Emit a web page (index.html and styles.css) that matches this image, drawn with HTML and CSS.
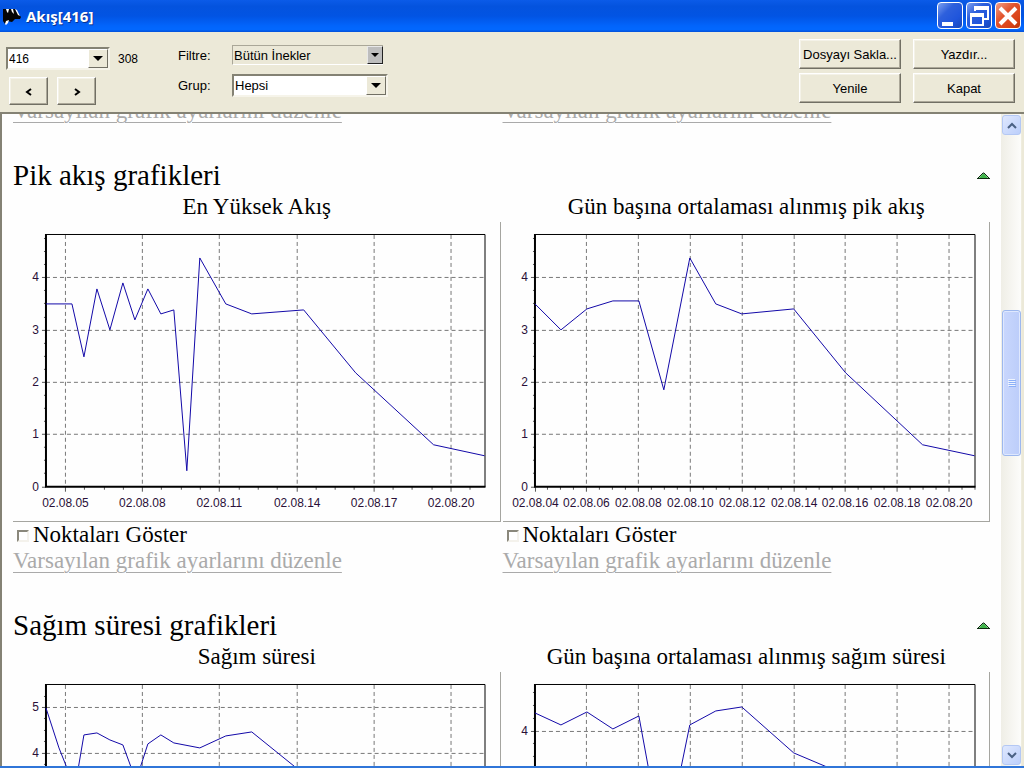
FILE: index.html
```html
<!DOCTYPE html>
<html lang="tr">
<head>
<meta charset="utf-8">
<meta name="viewport" content="width=device-width, initial-scale=1">
<title>Akış[416]</title>
<link rel="stylesheet" href="styles.css">
</head>
<body>
<div class="window">
  <header class="titlebar">
    <svg class="app-icon" width="18" height="20" viewBox="0 0 18 20" aria-hidden="true">
      <path d="M0 3h12l2 3 4 5-1 2-5 0-3 3-5-1-2 3-2-3z" fill="#050505"/>
      <path d="M3 3h3l-1 4-1-1zM8 3l2 0 1 5-2-2zM12 3l2 1 3 6-2-1zM2 18l1-3 3-1-1 3-2 2z" fill="#fff"/>
    </svg>
    <h1 class="title">Akış[416]</h1>
    <div class="window-buttons">
      <button class="wbtn" aria-label="Simge durumuna küçült"><svg width="24" height="24" viewBox="0 0 24 24"><path d="M4 18h11v4H4z" fill="#fff"/></svg></button>
      <button class="wbtn" aria-label="Önceki boyut"><svg width="24" height="24" viewBox="0 0 24 24"><path d="M8 7V3h13v12h-4" fill="none" stroke="#fff" stroke-width="2"/><path d="M7 4h15M3 11h14" stroke="#fff" stroke-width="4"/><path d="M4 10h12v11H4z" fill="none" stroke="#fff" stroke-width="2"/></svg></button>
      <button class="wbtn wbtn-close" aria-label="Pencereyi kapat"><svg width="24" height="24" viewBox="0 0 24 24"><path d="M4 4l16 16M20 4L4 20" stroke="#fff" stroke-width="4"/></svg></button>
    </div>
  </header>

  <div class="toolbar">
    <div class="picker">
      <div class="picker-row">
        <div class="combo combo-cow">
          <select aria-label="İnek numarası"><option>416</option></select>
          <span class="drop"><svg width="10" height="5" viewBox="0 0 10 5"><path d="M0 0h10L5 5z"/></svg></span>
        </div>
        <span class="count">308</span>
      </div>
      <div class="picker-nav">
        <button class="btn btn-nav" aria-label="Önceki"><svg width="8" height="8" viewBox="0 0 8 8"><path d="M6 1L2 4l4 3" class="nav-line"/></svg></button>
        <button class="btn btn-nav" aria-label="Sonraki"><svg width="8" height="8" viewBox="0 0 8 8"><path d="M2 1l4 3-4 3" class="nav-line"/></svg></button>
      </div>
    </div>
    <div class="filters">
      <label for="filter">Filtre:</label>
      <div class="combo combo-flat">
        <select id="filter"><option>Bütün İnekler</option></select>
        <span class="drop drop-small"><svg width="8" height="4" viewBox="0 0 8 4"><path d="M0 0h8L4 4z"/></svg></span>
      </div>
      <label for="group">Grup:</label>
      <div class="combo">
        <select id="group"><option>Hepsi</option></select>
        <span class="drop"><svg width="10" height="5" viewBox="0 0 10 5"><path d="M0 0h10L5 5z"/></svg></span>
      </div>
    </div>
    <div class="actions">
      <button class="btn">Dosyayı Sakla...</button>
      <button class="btn">Yazdır...</button>
      <button class="btn">Yenile</button>
      <button class="btn">Kapat</button>
    </div>
  </div>

  <div class="view">
    <main class="report">
      <div class="columns tail">
        <div><a class="edit" href="#">Varsayılan grafik ayarlarını düzenle</a></div>
        <div><a class="edit" href="#">Varsayılan grafik ayarlarını düzenle</a></div>
      </div>

      <section class="group">
        <div class="group-head">
          <h2>Pik akış grafikleri</h2>
          <a href="#" aria-label="Yukarı"><svg width="13" height="8" viewBox="0 0 13 8"><path d="M1.500 7.500L6 2.500h1l4.500 5z" fill="#3fb54a"/><path d="M1 7L6 2h1l5 5M0 7.500h13" fill="none" stroke="#0c2a10"/></svg></a>
        </div>
        <div class="columns">
          <article class="card">
            <h3>En Yüksek Akış</h3>
            <div class="chart" data-chart="peak"></div>
            <label class="check"><input type="checkbox">Noktaları Göster</label>
            <a class="edit" href="#">Varsayılan grafik ayarlarını düzenle</a>
          </article>
          <article class="card">
            <h3>Gün başına ortalaması alınmış pik akış</h3>
            <div class="chart" data-chart="peakAvg"></div>
            <label class="check"><input type="checkbox">Noktaları Göster</label>
            <a class="edit" href="#">Varsayılan grafik ayarlarını düzenle</a>
          </article>
        </div>
      </section>

      <section class="group">
        <div class="group-head">
          <h2>Sağım süresi grafikleri</h2>
          <a href="#" aria-label="Yukarı"><svg width="13" height="8" viewBox="0 0 13 8"><path d="M1.500 7.500L6 2.500h1l4.500 5z" fill="#3fb54a"/><path d="M1 7L6 2h1l5 5M0 7.500h13" fill="none" stroke="#0c2a10"/></svg></a>
        </div>
        <div class="columns">
          <article class="card">
            <h3>Sağım süresi</h3>
            <div class="chart" data-chart="time"></div>
          </article>
          <article class="card">
            <h3>Gün başına ortalaması alınmış sağım süresi</h3>
            <div class="chart" data-chart="timeAvg"></div>
          </article>
        </div>
      </section>
    </main>

    <div class="scrollbar">
      <button class="sbtn" aria-label="Yukarı kaydır"><svg width="10" height="7" viewBox="0 0 10 7"><path d="M1 6l4-4 4 4" class="chevron"/></svg></button>
      <div class="track">
        <div class="space-before"></div>
        <div class="thumb"><svg width="8" height="8" viewBox="0 0 8 8"><path d="M0 .5h7M0 2.5h7M0 4.5h7M0 6.5h7" stroke="#eef4fe"/><path d="M1 1.5h7M1 3.5h7M1 5.5h7M1 7.5h7" stroke="#8cb0f8"/></svg></div>
        <div class="space-after"></div>
      </div>
      <button class="sbtn" aria-label="Aşağı kaydır"><svg width="10" height="7" viewBox="0 0 10 7"><path d="M1 1l4 4 4-4" class="chevron"/></svg></button>
    </div>
  </div>
</div>
<script src="charts.js"></script>
</body>
</html>
```
FILE: styles.css
```css
* { box-sizing: border-box; }

body {
  margin: 0;
  font-family: "Liberation Sans", Arial, sans-serif;
  font-size: 13px;
  color: #000;
}

h1, h2, h3 { margin: 0; font-weight: 400; }

button, select, input { font: inherit; color: inherit; margin: 0; }

.window {
  display: flex;
  flex-direction: column;
  height: 100vh;
  overflow: hidden;
  background: #ece9d8;
  border-bottom: 2px solid #2f75d8;
}

/* title bar */
.titlebar {
  display: flex;
  align-items: center;
  flex: none;
  height: 32px;
  padding: 0 3px;
  background: linear-gradient(#0b5be8 0, #0453de 20%, #0254e3 50%, #0264fb 80%, #0268ff 92%, #0450d8 100%);
}

.app-icon { flex: none; margin-right: 5px; }

.title {
  flex: 1;
  font: 700 15px/20px "Open Sans", sans-serif;
  color: #fff;
  text-shadow: 1px 1px 0 #0a3190;
}

.window-buttons { display: flex; gap: 3px; padding-bottom: 1px; }

.wbtn {
  width: 26px;
  height: 27px;
  padding: 0;
  border: 1px solid #fff;
  border-radius: 4px;
  background: linear-gradient(135deg, #7da0f0 0, #2e60dc 35%, #1f55dc 70%, #1747b8 100%);
}

.wbtn svg { display: block; }

.wbtn-close { background: linear-gradient(135deg, #f2a088 0, #e2552f 40%, #da4318 75%, #b83208 100%); }

/* toolbar */
.toolbar {
  display: flex;
  align-items: flex-start;
  flex: none;
  height: 80px;
  padding: 7px 9px 0 6px;
}

.picker { width: 172px; padding-top: 8px; }
.picker-row { display: flex; align-items: center; gap: 8px; font-size: 12px; }
.picker-nav { display: flex; gap: 9px; padding: 7px 0 0 3px; }

.combo {
  display: flex;
  width: 156px;
  height: 23px;
  border: 2px solid;
  border-color: #848274 #f6f4ea #f6f4ea #848274;
  background: #fff;
}

.combo-cow { width: 104px; }

.combo select {
  flex: 1;
  min-width: 0;
  padding: 0 1px;
  border: 0;
  appearance: none;
  background: transparent;
}

.combo-cow select { font-size: 12px; }

.combo-flat {
  width: 151px;
  height: 20px;
  border-width: 1px 0 1px 1px;
  border-color: #aaa798 #fff #fff #aaa798;
  background: #ebe8d7;
}

.drop {
  display: flex;
  align-items: center;
  justify-content: center;
  flex: none;
  width: 20px;
  border: 1px solid;
  border-color: #fff #716f64 #716f64 #fff;
  background: #ece9d8;
}

.drop-small {
  width: 16px;
  border-color: #e8e8e8 #222 #222 #e8e8e8;
  background: #bdbdbd;
}

.filters {
  display: grid;
  grid-template-columns: 54px 156px;
  row-gap: 9px;
  align-items: center;
  padding-top: 6px;
}

.filters select { font-size: 13px; }

.actions {
  display: grid;
  grid-template-columns: 102px 102px;
  gap: 4px 12px;
  margin-left: auto;
}

.btn {
  height: 30px;
  padding: 0;
  border: 1px solid;
  border-color: #fff #716f64 #716f64 #fff;
  box-shadow: inset -1px -1px #aca899, inset 1px 1px #f4f2e8;
  background: #ece9d8;
  white-space: nowrap;
}

.btn-nav { width: 39px; height: 28px; }
.nav-line { fill: none; stroke: #000; stroke-width: 2; }

/* report pane */
.view {
  display: flex;
  flex: 1;
  min-height: 0;
  border: solid #848274;
  border-width: 2px 0 0 2px;
  background: #fefefe;
}

.report {
  flex: 1;
  min-width: 0;
  overflow: hidden;
  padding: 0 11px;
  font-family: "Liberation Serif", "Times New Roman", serif;
  font-size: 23px;
  line-height: 26px;
}

.columns { display: grid; grid-template-columns: 1fr 1fr; column-gap: 2px; }

.tail { margin-top: -16px; }

.edit {
  display: block;
  width: fit-content;
  color: #aaa;
  text-decoration: underline;
  text-decoration-thickness: 1px;
  text-underline-offset: 4px;
}

.group { padding-top: 33px; }

.group-head {
  display: flex;
  align-items: center;
  justify-content: space-between;
  line-height: 36px;
}

.group-head h2 { font-size: 29px; }
.group-head svg { display: block; }

.card h3 { font-size: 23px; line-height: 28px; padding-bottom: 1px; text-align: center; }

.chart {
  border: solid #a5a5a0;
  border-width: 0 1px 1px 0;
}

.chart svg { display: block; width: 100%; height: auto; }

.frame { fill: none; stroke: #000; }
.axis { fill: none; stroke: #000; stroke-width: 2; }
.grid { stroke: #777; stroke-dasharray: 4 3; }
.tick { stroke: #555; }
.series { fill: none; stroke: #1208a8; }
.axis-text { font: 12px "Liberation Sans", Arial, sans-serif; fill: #2a1038; }

.check { display: flex; align-items: center; }

.check input {
  width: 12px;
  height: 12px;
  margin: 2px 4px 0 4px;
  appearance: none;
  border: 2px solid;
  border-color: #8a887c #f4f2ec #f4f2ec #8a887c;
  background: #fff;
}

/* scrollbar */
.scrollbar {
  display: flex;
  flex-direction: column;
  flex: none;
  width: 23px;
  padding: 1px 2px 1px 1px;
  background: linear-gradient(90deg, #efeee6, #fcfcfa 85%, #ece9d8 90%);
}

.sbtn {
  display: flex;
  align-items: center;
  justify-content: center;
  flex: none;
  width: 19px;
  height: 20px;
  padding: 0;
  border: 1px solid #b4c8f4;
  border-radius: 3px;
  background: linear-gradient(135deg, #dfe8fe, #bccffb);
}

.chevron { fill: none; stroke: #4a6184; stroke-width: 2; }

.track { display: flex; flex-direction: column; flex: 1; }
.space-before { flex: 176; }
.space-after { flex: 290; }

.thumb {
  display: flex;
  align-items: center;
  justify-content: center;
  flex: 144;
  width: 19px;
  border: 1px solid #9db8ee;
  border-radius: 3px;
  box-shadow: inset 0 0 0 1px #dfe8fe;
  background: linear-gradient(90deg, #c9d7fd, #bccdfa);
}
```
FILE: charts.js
```js
const SVG_NS = 'http://www.w3.org/2000/svg';

// Plot geometry, shared by all charts (units of the SVG view box).
const PLOT = { top: 13, bottom: 265, right: 473, width: 487, height: 299 };

const THREE_DAY = { left: 33, first: 52.4, step: 77.2, labels: ['05', '08', '11', '14', '17', '20'] };
const TWO_DAY = { left: 32, first: 32, step: 51.8, labels: ['04', '06', '08', '10', '12', '14', '16', '18', '20'] };

const CHARTS = {
  peak: {
    x: THREE_DAY, max: 4, unit: 52.3,
    points: [[33, 82], [59, 82], [71, 135], [84, 67], [97, 108], [110, 61], [122, 98], [135, 67], [148, 92], [161, 88],
      [174, 249], [187, 36], [213, 82], [239, 92], [291, 88], [343, 151], [421, 223], [472, 234]]
  },
  peakAvg: {
    x: TWO_DAY, max: 4, unit: 52.3,
    points: [[32, 82], [58, 108], [84, 87], [110, 79], [136, 79], [161, 168], [187, 36], [213, 82], [239, 92],
      [291, 87], [343, 151], [420, 223], [472, 234]]
  },
  time: {
    x: THREE_DAY, max: 5, unit: 45.9,
    points: [[33, 36], [46, 76], [58, 106], [64, 104], [71, 63], [84, 61], [97, 68], [110, 73], [121, 103], [125, 103],
      [135, 72], [148, 63], [161, 71], [187, 76], [213, 64], [239, 60], [291, 102], [343, 140], [421, 180], [472, 190]]
  },
  timeAvg: {
    x: TWO_DAY, max: 4, unit: 51.5,
    points: [[32, 41], [58, 53], [84, 40], [110, 57], [136, 44], [161, 180], [187, 53], [213, 39], [239, 35],
      [291, 81], [343, 103], [420, 150], [472, 165]]
  }
};

function add(parent, name, attrs, text) {
  const node = document.createElementNS(SVG_NS, name);
  for (const key in attrs) node.setAttribute(key, attrs[key]);
  if (text !== undefined) node.textContent = text;
  parent.appendChild(node);
  return node;
}

const snap = (v) => Math.floor(v) + 0.5;

function draw(host, chart) {
  const { left, first, step, labels } = chart.x;
  const svg = add(host, 'svg', { viewBox: `0 0 ${PLOT.width} ${PLOT.height}`, role: 'img' });

  for (let v = 0; v * chart.unit < PLOT.bottom - PLOT.top; v += 0.25) {
    const y = snap(PLOT.bottom - v * chart.unit);
    const whole = Number.isInteger(v);
    add(svg, 'path', { class: 'tick', d: `M${left - (whole ? 4 : 2)} ${y}H${left}` });
    if (whole && v > 0) add(svg, 'path', { class: 'grid', d: `M${left} ${y}H${PLOT.right}` });
    if (whole) add(svg, 'text', { class: 'axis-text', x: left - 7, y: y + 4, 'text-anchor': 'end' }, v);
  }

  labels.forEach((day, i) => {
    const x = first + i * step;
    if (x > left) add(svg, 'path', { class: 'grid', d: `M${snap(x)} ${PLOT.top}V${PLOT.bottom}` });
    add(svg, 'path', { class: 'tick', d: `M${snap(x)} ${PLOT.bottom}v5` });
    for (let q = 1; q < 4; q++) {
      const minor = x + q * step / 4;
      if (minor < PLOT.right) add(svg, 'path', { class: 'tick', d: `M${snap(minor)} ${PLOT.bottom}v3` });
    }
    add(svg, 'text', { class: 'axis-text', x: snap(x), y: 285, 'text-anchor': 'middle' }, `02.08.${day}`);
  });

  add(svg, 'path', { class: 'frame', d: `M${left} ${PLOT.top - 0.5}H${PLOT.right - 0.5}V${PLOT.bottom}` });
  add(svg, 'path', { class: 'axis', d: `M${left} ${PLOT.top - 1}V${PLOT.bottom}H${PLOT.right}` });
  add(svg, 'polyline', { class: 'series', points: chart.points.map((p) => p.join(',')).join(' ') });
}

document.querySelectorAll('[data-chart]').forEach((host) => draw(host, CHARTS[host.dataset.chart]));
```
